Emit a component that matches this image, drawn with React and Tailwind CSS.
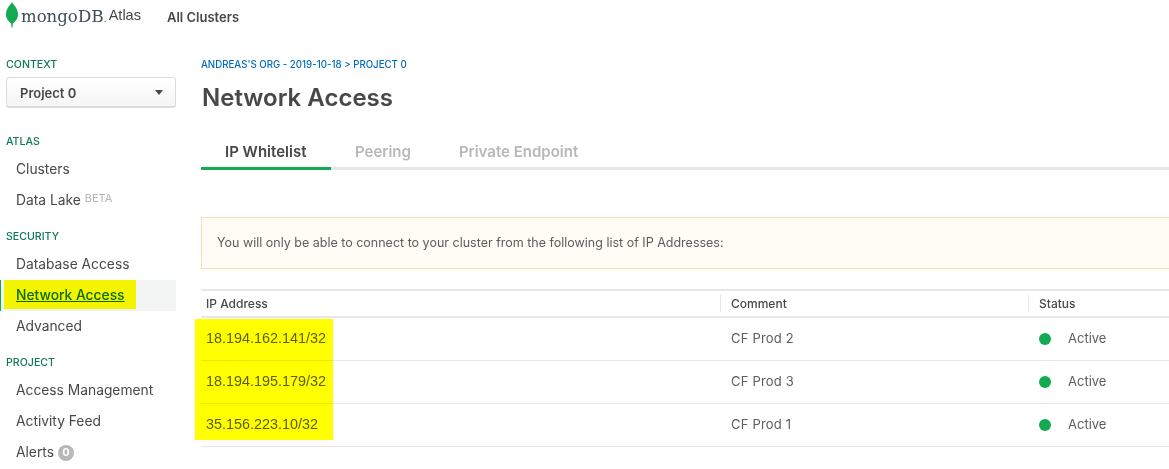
const sections = [
  { title: 'ATLAS', items: ['Clusters', 'Data Lake'] },
  { title: 'SECURITY', items: ['Database Access', 'Network Access', 'Advanced'] },
  { title: 'PROJECT', items: ['Access Management', 'Activity Feed', 'Alerts'] },
]

const rows = [
  { ip: '18.194.162.141/32', comment: 'CF Prod 2' },
  { ip: '18.194.195.179/32', comment: 'CF Prod 3' },
  { ip: '35.156.223.10/32', comment: 'CF Prod 1' },
]

function Leaf() {
  return (
    <svg width="12" height="26" viewBox="0 0 12 26" className="shrink-0 -mt-[6px]">
      <path d="M6 0C7 2.500 12 6 12 12.500C12 17.500 8.500 20 6.800 21.500L6.500 25.500H5.500L5.200 21.500C3.500 20 0 17.500 0 12.500C0 6 5 2.500 6 0Z" fill="#13aa52" />
    </svg>
  )
}

function NavItem({ label }) {
  if (label === 'Network Access') {
    return (
      <div className="relative h-[31px] w-[176px] flex items-center pl-4 pb-px bg-[#f3f4f4] border-l border-[#13aa52]">
        <span className="-ml-px text-[#0a6b2a] font-medium underline">{label}</span>
        <div className="absolute left-[3px] top-0 w-[132px] h-[29px] bg-[#ffff00] mix-blend-multiply" />
      </div>
    )
  }
  return (
    <div className="h-[31px] flex items-center pl-4 text-[#494747]">
      {label}
      {label === 'Data Lake' && <span className="ml-[4px] -mt-[5px] text-[11px] text-[#b8b4b4]">BETA</span>}
      {label === 'Alerts' && (
        <span className="ml-[4px] w-4 h-4 rounded-full bg-[#b8b8b8] text-white text-[11px] font-bold flex items-center justify-center">0</span>
      )}
    </div>
  )
}

function Sidebar() {
  return (
    <aside className="w-[201px] shrink-0 text-[13.8px]">
      <div className="pl-1.5 pt-[22px] text-[10.6px] font-medium leading-4 text-[#107a55]">CONTEXT</div>
      <div className="ml-1.5 mt-[4px] w-[170px] h-[31px] rounded-[3px] border border-[#dcdcdc] border-b-2 bg-gradient-to-b from-white to-[#f5f5f5] flex items-center justify-between pl-[13px] pr-[12px] font-semibold text-[13px] text-[#494747]">
        <span className="pt-[3px]">Project 0</span>
        <span className="w-0 h-0 border-x-[4.500px] border-x-transparent border-t-[5px] border-t-[#494747]" />
      </div>
      <div className="mt-[25px]">
        {sections.map((s) => (
          <div key={s.title} className="mb-[12px]">
            <div className="pl-1.5 h-[18px] leading-[18px] mb-[3px] text-[10.6px] font-medium text-[#107a55]">{s.title}</div>
            {s.items.map((item) => (
              <NavItem key={item} label={item} />
            ))}
          </div>
        ))}
      </div>
    </aside>
  )
}

export default function App() {
  return (
    <div className="h-[469px] w-[1169px] overflow-hidden bg-white font-['Inter',sans-serif] text-[#494747]">
      <header className="h-[35px] flex items-center pl-1.5">
        <Leaf />
        <span className="ml-[3px] -mt-[2px] font-['DejaVu_Serif',serif] text-[16.500px] leading-none text-[#3d4f58]">mongo<span className="text-[17px]">DB</span><span className="text-[9px]">.</span></span>
        <span className="ml-[2px] -mt-[4px] font-['Liberation_Sans',sans-serif] text-[14.500px] text-[#494747]">Atlas</span>
        <span className="ml-[26px] mt-px text-[13px] font-semibold text-[#494747]">All Clusters</span>
      </header>

      <div className="flex">
        <Sidebar />
        <main className="flex-1 min-w-0">
          <div className="pt-[24px] text-[9.700px] font-medium leading-3 text-[#006cbc]">ANDREAS'S ORG - 2019-10-18 &gt; PROJECT 0</div>
          <h1 className="mt-[8px] pl-px text-[24px] font-semibold leading-[38px] text-[#494747]">Network Access</h1>

          <div className="mt-[16px] flex h-[37px] border-b-[3px] border-[#e7e7e7] text-[15px] font-semibold text-[#b8b8b8]">
            <div className="w-[130px] h-[37px] border-b-[3px] border-[#13aa52] pl-6 pt-[8px] text-[#494747]">IP Whitelist</div>
            <div className="ml-6 pt-[8px]">Peering</div>
            <div className="ml-12 pt-[8px]">Private Endpoint</div>
          </div>

          <div className="mt-[47px] h-[52px] flex items-center pl-[15px] border-y border-l border-[#f5dfb5] bg-[#fffcf5] text-[12.500px] text-[#5d5d5d]">
            You will only be able to connect to your cluster from the following list of IP Addresses:
          </div>

          <div className="mt-[20px] border-t-2 border-[#e7e7e7] text-[12px] font-medium">
            <div className="h-[27px] grid grid-cols-[519px_308px_1fr] items-center border-b-2 border-[#e7e7e7] text-[#494747]">
              <div className="pl-[5px]">IP Address</div>
              <div className="border-l border-[#e7e7e7] pl-[10px] h-[17px] leading-[17px]">Comment</div>
              <div className="border-l border-[#e7e7e7] pl-[10px] h-[17px] leading-[17px]">Status</div>
            </div>
            <div className="relative font-normal text-[13px] text-[#5d5d5d]">
              {rows.map((r) => (
                <div key={r.ip} className="h-[43px] grid grid-cols-[519px_308px_1fr] items-center border-b border-[#e7e7e7]">
                  <div className="pl-[5px] font-['Liberation_Sans',sans-serif] text-[14.400px]">{r.ip}</div>
                  <div className="pl-[11px] tracking-[0.2px]">{r.comment}</div>
                  <div className="pl-[11px] flex items-center">
                    <span className="w-3 h-3 rounded-full bg-[#13aa52]" />
                    <span className="ml-[17px]">Active</span>
                  </div>
                </div>
              ))}
              <div className="absolute -left-[6px] top-[1px] w-[138px] h-[121px] bg-[#ffff00] mix-blend-multiply" />
            </div>
          </div>
        </main>
      </div>
    </div>
  )
}
